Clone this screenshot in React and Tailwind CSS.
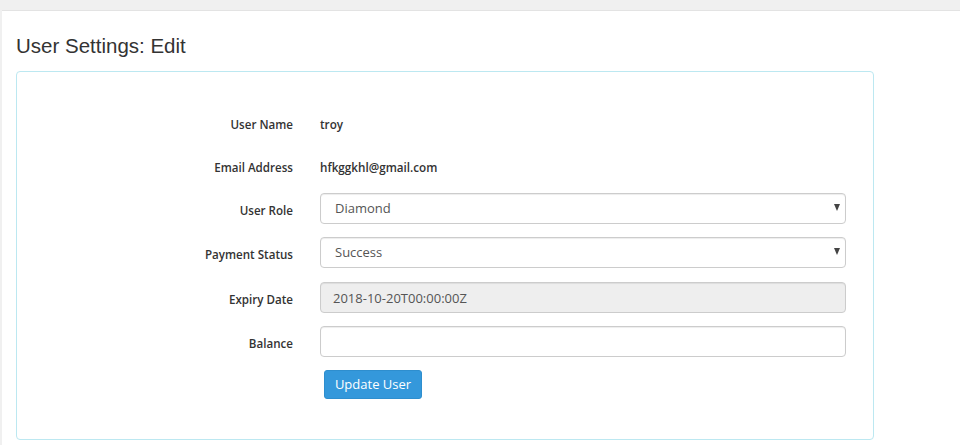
import React, { useState } from 'react';

const labelCls = "w-[276px] shrink-0 text-right text-[11.6px] font-semibold text-[#333] leading-[16px]";
const valueCls = "ml-[27px] text-[11.7px] font-semibold text-[#333]";
const fieldCls = "w-[526px] h-[31px] border border-[#ccc] rounded-[4px] px-[12px] text-[13px] text-[#555] shadow-[inset_0_1px_1px_rgba(0,0,0,0.075)] outline-none";

function SelectField({ value, options, onChange }) {
  return (
    <div className="relative w-[526px]">
      <select
        value={value}
        onChange={e => onChange(e.target.value)}
        className={fieldCls + " appearance-none bg-white pl-[14px]"}
      >
        {options.map(o => <option key={o} value={o}>{o}</option>)}
      </select>
      <span className="absolute right-[6px] top-[11px] w-0 h-0 border-l-[3.5px] border-r-[3.5px] border-t-[7px] border-l-transparent border-r-transparent border-t-[#444] pointer-events-none"></span>
    </div>
  );
}

export default function App() {
  const [role, setRole] = useState('Diamond');
  const [status, setStatus] = useState('Success');
  const [balance, setBalance] = useState('');

  return (
    <div className="min-h-screen bg-[#f0f0f0] pt-[10px] pl-[2px]" style={{ fontFamily: '"Open Sans", sans-serif' }}>
      <div className="bg-white border-t border-[#e3e3e3] min-h-[435px] pl-[14px] pt-[20px]">
        <h1 className="text-[20.5px] leading-[30px] text-[#333] font-normal mb-[10px]" style={{ fontFamily: '"Liberation Sans", Arial, sans-serif' }}>
          User Settings: Edit
        </h1>

        <div className="w-[858px] h-[369px] border border-[#bce8f1] rounded-[4px] pt-[37px]">
          {/* text rows */}
          <div className="flex items-center h-[31px] mb-[12px]">
            <span className={labelCls}>User Name</span>
            <span className={valueCls}>troy</span>
          </div>
          <div className="flex items-center h-[31px] mb-[10px]">
            <span className={labelCls}>Email Address</span>
            <span className={valueCls}>hfkggkhl@gmail.com</span>
          </div>

          {/* field rows */}
          <div className="flex items-start mb-[13px]">
            <span className={labelCls + " pt-[10px]"}>User Role</span>
            <div className="ml-[27px]">
              <SelectField value={role} onChange={setRole} options={['Diamond', 'Gold', 'Silver', 'Free']} />
            </div>
          </div>
          <div className="flex items-start mb-[14px]">
            <span className={labelCls + " pt-[10px]"}>Payment Status</span>
            <div className="ml-[27px]">
              <SelectField value={status} onChange={setStatus} options={['Success', 'Pending', 'Failed']} />
            </div>
          </div>
          <div className="flex items-start mb-[13px]">
            <span className={labelCls + " pt-[10px]"}>Expiry Date</span>
            <input
              type="text"
              disabled
              value="2018-10-20T00:00:00Z"
              className={fieldCls + " ml-[27px] bg-[#eee]"}
            />
          </div>
          <div className="flex items-start mb-[13px]">
            <span className={labelCls + " pt-[10px]"}>Balance</span>
            <input
              type="text"
              value={balance}
              onChange={e => setBalance(e.target.value)}
              className={fieldCls + " ml-[27px] bg-white"}
            />
          </div>

          <div className="flex">
            <button className="ml-[307px] w-[98px] h-[29px] bg-[#3498db] border border-[#2e8ece] rounded-[3px] text-white text-[13px] leading-none">
              Update User
            </button>
          </div>
        </div>
      </div>
    </div>
  );
}
